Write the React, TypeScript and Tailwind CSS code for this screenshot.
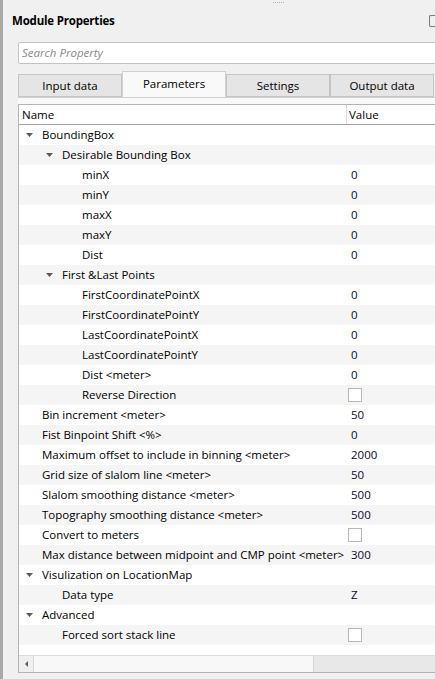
import React from 'react';

type Row = {
  label: string;
  level: number;
  group?: boolean;
  value?: string;
  check?: boolean;
};

const rows: Row[] = [
  { label: 'BoundingBox', level: 0, group: true },
  { label: 'Desirable Bounding Box', level: 1, group: true },
  { label: 'minX', level: 2, value: '0' },
  { label: 'minY', level: 2, value: '0' },
  { label: 'maxX', level: 2, value: '0' },
  { label: 'maxY', level: 2, value: '0' },
  { label: 'Dist', level: 2, value: '0' },
  { label: 'First &Last Points', level: 1, group: true },
  { label: 'FirstCoordinatePointX', level: 2, value: '0' },
  { label: 'FirstCoordinatePointY', level: 2, value: '0' },
  { label: 'LastCoordinatePointX', level: 2, value: '0' },
  { label: 'LastCoordinatePointY', level: 2, value: '0' },
  { label: 'Dist <meter>', level: 2, value: '0' },
  { label: 'Reverse Direction', level: 2, check: true },
  { label: 'Bin increment <meter>', level: 0, value: '50' },
  { label: 'Fist Binpoint Shift <%>', level: 0, value: '0' },
  { label: 'Maximum offset to include in binning <meter>', level: 0, value: '2000' },
  { label: 'Grid size of slalom line <meter>', level: 0, value: '50' },
  { label: 'Slalom smoothing distance <meter>', level: 0, value: '500' },
  { label: 'Topography smoothing distance <meter>', level: 0, value: '500' },
  { label: 'Convert to meters', level: 0, check: true },
  { label: 'Max distance between midpoint and CMP point <meter>', level: 0, value: '300' },
  { label: 'Visulization on LocationMap', level: 0, group: true },
  { label: 'Data type', level: 1, value: 'Z' },
  { label: 'Advanced', level: 0, group: true },
  { label: 'Forced sort stack line', level: 1, check: true },
];

const indentClass = ['pl-[7px]', 'pl-[27px]', 'pl-[47px]'];

function Arrow() {
  return (
    <svg width="7" height="4" viewBox="0 0 7 4" className="mr-[9px] shrink-0">
      <path d="M0 0 H7 L3.5 4 Z" fill="#5a5a5a" />
    </svg>
  );
}

const tabs = ['Input data', 'Parameters', 'Settings', 'Output data'];

export default function App() {
  return (
    <div
      className="relative w-[435px] h-[679px] overflow-hidden bg-[#f0f0f0] text-[11.5px] text-black"
      style={{ fontFamily: '"Segoe UI", "Open Sans", "Noto Sans", sans-serif' }}
    >
      <div className="absolute left-0 top-0 w-[3px] h-full bg-[#a9a9a9]" />
      <div className="absolute left-[273px] top-[2px] flex gap-[1px]">
        {[0, 1, 2, 3, 4, 5].map(i => (
          <span key={i} className="w-[1px] h-[1px] bg-[#b0b0b0]" />
        ))}
      </div>

      <div className="flex items-center justify-between h-[20px] mt-[11px] pl-[12px]">
        <span className="font-bold text-[11.5px] tracking-[-0.2px]">Module Properties</span>
        <span className="w-[6px] h-[12px] border border-[#7a7a7a] rounded-l-[2px] border-r-0" />
      </div>

      <div className="ml-[18px] mt-[11px] w-[440px] h-[22px] bg-white border border-[#c3c3c3] rounded-[2px] flex items-center pl-[3px]">
        <span className="italic text-[#8a8a8a]">Search Property</span>
      </div>

      <div className="ml-[18px] mt-[7px] w-[440px] flex items-end h-[26px]">
        {tabs.map(t => {
          const sel = t === 'Parameters';
          return (
            <div
              key={t}
              className={
                sel
                  ? 'w-[104px] h-[26px] bg-[#f9f9f9] border border-b-0 border-[#d0d0d0] flex items-center justify-center pb-[2px]'
                  : 'w-[104px] h-[23px] bg-[#e5e5e5] border border-[#c5c5c5] flex items-center justify-center'
              }
            >
              {t}
            </div>
          );
        })}
      </div>

      <div className="ml-[18px] w-[440px] border-t border-[#d0d0d0] bg-[#f9f9f9] pt-[6px]">
        <div className="border border-[#b4b4b4] bg-white">
          <div className="flex h-[20px] border-b border-[#a0a0a0] bg-white">
            <div className="w-[328px] pl-[3px] flex items-center border-r border-[#e0e0e0]">Name</div>
            <div className="pl-[2px] flex items-center">Value</div>
          </div>
          <div>
            {rows.map((r, i) => (
              <div key={i} className={'flex h-[20px] ' + (i % 2 === 1 ? 'bg-[#f5f5f5]' : 'bg-white')}>
                <div className={'w-[329px] flex items-center ' + indentClass[r.level]}>
                  {r.group ? <Arrow /> : <span className="w-[16px] shrink-0" />}
                  <span className="whitespace-nowrap">{r.label}</span>
                </div>
                <div className="flex items-center">
                  {r.check ? (
                    <span className="w-[14px] h-[14px] bg-white border border-[#b8b8b8]" />
                  ) : (
                    <span className="pl-[3px] text-[#0a0a28]">{r.value}</span>
                  )}
                </div>
              </div>
            ))}
            <div className="h-[10px] bg-white" />
          </div>
          <div className="flex h-[17px] border-t border-[#dcdcdc] bg-[#e8e8e8]">
            <div className="w-[14px] flex items-center justify-center bg-[#f0f0f0]">
              <svg width="3" height="6" viewBox="0 0 3 6">
                <path d="M3 0 V6 L0 3 Z" fill="#606060" />
              </svg>
            </div>
            <div className="w-[281px] bg-[#f8f8f8] border-x border-[#d6d6d6]" />
            <div className="flex-1" />
          </div>
        </div>
      </div>
    </div>
  );
}
